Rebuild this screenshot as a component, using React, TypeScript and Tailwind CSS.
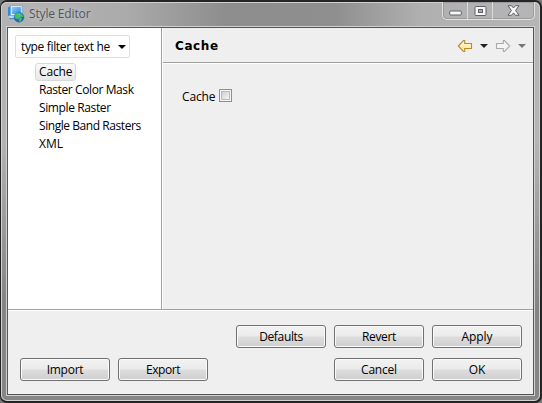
import React from "react";

const ui = "font-['Open_Sans','Noto_Sans',sans-serif]";

function PushButton({ label, spacing = "" }: { label: string; spacing?: string }) {
  return (
    <button
      className={`flex h-[23px] w-[90px] items-center justify-center rounded-[3px] border border-[#707070] bg-[linear-gradient(#f2f2f2_0%,#ebebeb_48%,#dddddd_52%,#cfcfcf_100%)] pt-px text-[12px] leading-none text-black shadow-[inset_0_0_0_1px_#fafafa] ${spacing}`}
    >
      {label}
    </button>
  );
}

function AppIcon() {
  return (
    <svg width="18" height="18" viewBox="0 0 18 18" className="shrink-0">
      <defs>
        <linearGradient id="screen" x1="0" y1="0" x2="1" y2="1">
          <stop offset="0" stopColor="#8fd0ff" />
          <stop offset="1" stopColor="#2387dc" />
        </linearGradient>
        <radialGradient id="globe" cx=".4" cy=".3">
          <stop offset="0" stopColor="#9bd8f5" />
          <stop offset="1" stopColor="#1769ad" />
        </radialGradient>
      </defs>
      <path d="M1 2.5 4 1v9L1 11z" fill="#3989cd" />
      <rect x="3.5" y=".8" width="11.5" height="9.7" fill="#e4f4ff" stroke="#67a8dc" strokeWidth=".7" />
      <rect x="4.8" y="2" width="9" height="7" fill="url(#screen)" />
      <path d="M1 11.5 4 11h5v3.5L4 14z" fill="#b9dcf5" />
      <path d="M2 13h7v1.3H3z" fill="#408fd0" />
      <circle cx="12" cy="12.3" r="4.9" fill="url(#globe)" stroke="#2369a0" strokeWidth=".5" />
      <path d="M8 10.5 10 8l2.4.2-.5 1.8 1.6 1-1.7 1.8-1.4-.5L9 14zM13.5 8.5l2 1.3 1 2.5-2-.5zM12.5 13l2.5.2-.9 2.7-2 .8z" fill="#45c64c" />
    </svg>
  );
}

function NavArrow({ forward = false }: { forward?: boolean }) {
  return (
    <svg width="16" height="14" viewBox="0 0 16 14" className={forward ? "-scale-x-100" : ""}>
      <defs>
        <linearGradient id="gold" x1="0" y1="0" x2="0" y2="1">
          <stop offset="0" stopColor="#fffbe1" />
          <stop offset="1" stopColor="#ffe68b" />
        </linearGradient>
      </defs>
      <path
        d="M1.3 7 6.5 1.5h1.2v3h6.8v5H7.7v3H6.5z"
        fill={forward ? "#f4f4f4" : "url(#gold)"}
        stroke={forward ? "#aaa" : "#b9892c"}
        strokeWidth="1.1"
      />
    </svg>
  );
}

function Caret({ className }: { className: string }) {
  return (
    <svg width="8" height="4" viewBox="0 0 8 4" className={className}>
      <path d="M0 0h8L4 4z" fill="currentColor" />
    </svg>
  );
}

function WindowControls() {
  return (
    <div className="flex h-[18px] w-[93px] rounded-b-[5px] border border-t-0 border-[#e0e0e0] shadow-[inset_0_0_0_1px_#9b9b9b]">
      <div className="flex w-[25px] items-center justify-center border-r border-[#dadada] pt-1">
        <svg width="13" height="6" viewBox="0 0 13 6">
          <rect x=".7" y="1" width="11.6" height="4" rx="1" fill="#f7f7f7" stroke="#5f6068" />
        </svg>
      </div>
      <div className="flex w-[25px] items-center justify-center border-r border-[#dadada]">
        <svg width="13" height="10" viewBox="0 0 13 10">
          <rect x="1" y=".5" width="11" height="9" rx="1" fill="#f7f7f7" stroke="#5f6068" />
          <rect x="4.5" y="3.5" width="4" height="3" fill="#aaa" stroke="#5f6068" />
        </svg>
      </div>
      <div className="flex flex-1 items-center justify-center">
        <svg width="13" height="11" viewBox="0 0 13 11">
          <path
            d="M1 .7h3.5l2 2.3 2-2.3H12L8.6 5.5 12 10.3H8.5l-2-2.4-2 2.4H1l3.4-4.8z"
            fill="#f7f7f7"
            stroke="#5f6068"
          />
        </svg>
      </div>
    </div>
  );
}

const pages = [
  { name: "Raster Color Mask", spacing: "tracking-[-0.4px]" },
  { name: "Simple Raster", spacing: "tracking-[-0.38px]" },
  { name: "Single Band Rasters", spacing: "tracking-[-0.44px]" },
  { name: "XML", spacing: "" },
];

export default function App() {
  return (
    <div className="h-[403px] w-[542px] bg-[#777]">
      <div
        className={`${ui} flex h-full flex-col overflow-hidden rounded-[7px] border-y-2 border-l border-r-2 border-[#242424] border-t-[#272329] bg-[linear-gradient(#ffffff00_0%,#ffffff00_35%,#858585_75%),linear-gradient(90deg,#b3b3b3_0%,#ababab_23%,#8d8d8d_42%,#8f8f8f_62%,#b0b0b0_78%,#b5b5b5_100%)] text-[12px] text-black`}
      >
        <div className="flex h-[399px] flex-col rounded-[6px] border border-[#d0d0d0] px-[4px] pb-[4px]">
          <header className="flex h-[23px] shrink-0 items-start justify-between">
            <div className="flex items-center gap-[4px] pt-[2px] pl-[1px]">
              <AppIcon />
              <span className="text-[12px] leading-[18px] tracking-[-0.15px] text-[#505761] [text-shadow:0_0_7px_#e0e0e0]">
                Style Editor
              </span>
            </div>
            <div className="-mt-px">
              <WindowControls />
            </div>
          </header>

          <div className="flex min-h-0 flex-1 flex-col border border-[#d0d0d0]">
            <div className="flex min-h-0 flex-1 flex-col border border-[#555] bg-[#efefef]">
              <div className="flex h-[281px] shrink-0">
                <aside className="w-[153px] shrink-0 bg-white pt-[7px] pl-[7px]">
                  <div className="flex h-[23px] w-[115px] items-center justify-between rounded-[2px] border border-[#dcdfe2] pr-[3px] pl-[5px]">
                    <span className="whitespace-nowrap leading-none tracking-[-0.34px]">type filter text he</span>
                    <Caret className="mt-px text-black" />
                  </div>
                  <ul className="pt-[5px] pl-[20px] leading-[18px]">
                    <li className="flex h-[18px] w-[41px] items-center rounded-[3px] border border-[#d8d8d8] bg-linear-to-b from-[#fafafa] to-[#e7e7e7] pl-[3px] tracking-[-0.15px]">
                      Cache
                    </li>
                    {pages.map((page) => (
                      <li key={page.name} className={`h-[18px] whitespace-nowrap pl-[4px] ${page.spacing}`}>
                        {page.name}
                      </li>
                    ))}
                  </ul>
                </aside>
                <main className="flex-1 border-l border-[#a0a0a0]">
                  <div className="h-full border-l border-white">
                    <div className="flex h-[35px] items-center justify-between border-b border-[#a0a0a0] pr-[7px] pl-[12px]">
                      <h1 className="pt-[2px] font-['DejaVu_Sans',sans-serif] text-[12px] font-bold leading-none tracking-[0.6px]">Cache</h1>
                      <div className="flex items-center pt-px">
                        <NavArrow />
                        <Caret className="ml-[7px] text-[#202020]" />
                        <span className="w-[7px]" />
                        <NavArrow forward />
                        <Caret className="ml-[7px] text-[#777]" />
                      </div>
                    </div>
                    <div className="border-t border-white pt-[24px] pl-[19px]">
                      <div className="flex h-[18px] items-center gap-[4px]">
                        <span className="w-[33px] leading-[18px] tracking-[-0.15px]">Cache</span>
                        <span className="mb-[3px] flex h-[13px] w-[13px] items-center justify-center border border-[#8e8f8f] bg-[#f5f5f5]">
                          <span className="h-[9px] w-[9px] border border-[#b7bcc2] bg-linear-to-br from-[#cbd0d5] to-[#f6f6f6]" />
                        </span>
                      </div>
                    </div>
                  </div>
                </main>
              </div>

              <footer className="flex flex-1 flex-col gap-[10px] border-t border-[#a0a0a0] pr-[11px] pl-[12px] pt-[15px] shadow-[inset_0_1px_0_#fff]">
                <div className="flex justify-end gap-[8px]">
                  <PushButton label="Defaults" spacing="tracking-[-0.35px]" />
                  <PushButton label="Revert" spacing="tracking-[-0.35px]" />
                  <PushButton label="Apply" spacing="tracking-[-0.1px]" />
                </div>
                <div className="flex justify-between">
                  <div className="flex gap-[8px]">
                    <PushButton label="Import" spacing="tracking-[-0.25px]" />
                    <PushButton label="Export" spacing="tracking-[-0.45px]" />
                  </div>
                  <div className="flex gap-[8px]">
                    <PushButton label="Cancel" spacing="tracking-[-0.2px]" />
                    <PushButton label="OK" />
                  </div>
                </div>
              </footer>
            </div>
          </div>
        </div>
      </div>
    </div>
  );
}
